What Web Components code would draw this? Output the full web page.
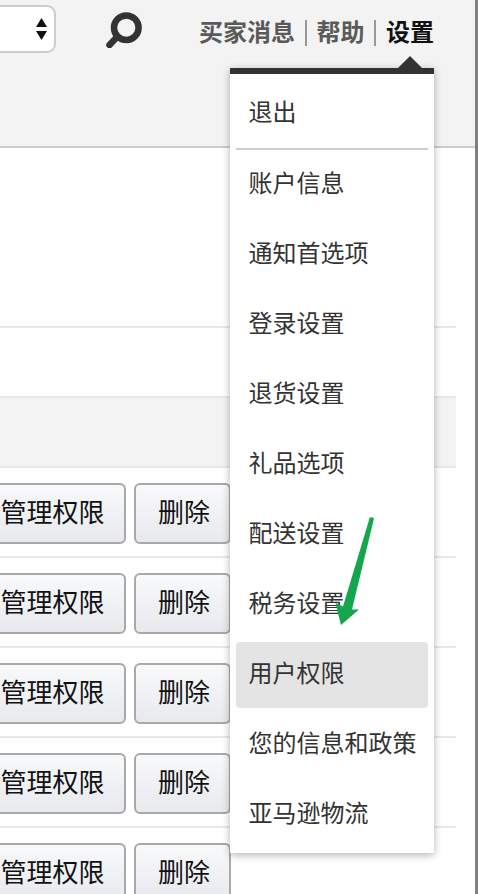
<!doctype html>
<html lang="zh"><head><meta charset="utf-8"><title>设置</title>
<style>
html,body{margin:0;height:100%;overflow:hidden;background:#fff}
body{font-family:"Liberation Sans","Noto Sans CJK SC",sans-serif;color:#333}
</style></head>
<body>
<app-page>
  <app-header>
    <nav-link>买家消息</nav-link><nav-link sep>帮助</nav-link><nav-link sep active>设置</nav-link>
  </app-header>
  <app-section></app-section>
  <app-row plain></app-row>
  <app-row head></app-row>
  <app-row><ui-button wide>管理权限</ui-button><ui-button>删除</ui-button></app-row>
  <app-row><ui-button wide>管理权限</ui-button><ui-button>删除</ui-button></app-row>
  <app-row><ui-button wide>管理权限</ui-button><ui-button>删除</ui-button></app-row>
  <app-row><ui-button wide>管理权限</ui-button><ui-button>删除</ui-button></app-row>
  <app-row><ui-button wide>管理权限</ui-button><ui-button>删除</ui-button></app-row>
  <drop-menu>
    <menu-item>退出</menu-item>
    <menu-sep></menu-sep>
    <menu-item>账户信息</menu-item>
    <menu-item>通知首选项</menu-item>
    <menu-item>登录设置</menu-item>
    <menu-item>退货设置</menu-item>
    <menu-item>礼品选项</menu-item>
    <menu-item>配送设置</menu-item>
    <menu-item>税务设置</menu-item>
    <menu-item active>用户权限</menu-item>
    <menu-item>您的信息和政策</menu-item>
    <menu-item>亚马逊物流</menu-item>
  </drop-menu>
  <green-arrow></green-arrow>
</app-page>
<script>
function def(name, css, html){
  customElements.define(name, class extends HTMLElement{
    constructor(){super();this.attachShadow({mode:'open'}).innerHTML='<style>'+css+'</style>'+html;}
  });
}
def('app-page',`:host{display:block;position:relative;width:478px;height:894px;overflow:hidden;box-sizing:border-box;border-right:3px solid #808080;background:#fff}`,`<slot></slot>`);
def('app-header',`:host{display:flex;justify-content:flex-end;align-items:flex-start;box-sizing:border-box;height:148px;background:#f3f3f3;border-bottom:2px solid #ccc;padding:5px 41px 0 0;overflow:hidden}
.sel{flex:none;width:120px;height:48px;box-sizing:border-box;background:#fff;border:2px solid #ccc;border-radius:9px;display:flex;justify-content:flex-end;align-items:center;padding-right:7px}
.sel svg{display:block}
.mag{flex:none;display:block;margin:7px 57px 0 50px}
.nav{flex:none;display:flex;align-items:center;height:56px}`,
`<div class="sel"><svg width="11" height="22" viewBox="0 0 11 22"><path d="M5.5 0L11 9H0zM5.5 22L0 13H11z" fill="#111"/></svg></div>
<svg class="mag" width="36" height="36" viewBox="0 0 36 36"><circle cx="20.3" cy="15.7" r="12.3" fill="none" stroke="#333" stroke-width="6.5"/><path d="M10.5 25.5L3.5 33" stroke="#333" stroke-width="6.5" stroke-linecap="round"/></svg>
<div class="nav"><slot></slot></div>`);
def('nav-link',`:host{display:flex;align-items:center;font:bold 24px/28px "Liberation Sans","Noto Sans CJK SC",sans-serif;color:#5a5a5a}
:host([active]){color:#111}
i{display:none;width:2px;height:26px;background:#999;margin:0 10px 0 9.5px}
:host([sep]) i{display:block}`,`<i></i><slot></slot>`);
def('app-section',`:host{display:block;height:178px}`,``);
def('app-row',`:host{display:flex;justify-content:flex-end;align-items:flex-start;gap:8px;box-sizing:border-box;width:456px;height:90px;border-bottom:2px solid #e8e8e8;padding:15px 225px 0 0}
:host([plain]){height:70px;padding:0;border-top:2px solid #e8e8e8;border-bottom:0}
:host([head]){height:72px;padding:0;background:#f3f3f3;border-top:2px solid #e8e8e8}`,`<slot></slot>`);
def('ui-button',`:host{flex:none;display:flex;justify-content:center;align-items:center;box-sizing:border-box;width:97px;height:61px;padding:0 0 2px 3px;border:2px solid #a9a9a9;border-radius:6px;background:linear-gradient(#f8f9fb,#e7e9ed);font:26px/30px "Liberation Sans","Noto Sans CJK SC",sans-serif;color:#111}
:host([wide]){width:147px;padding-left:0}`,`<slot></slot>`);
def('drop-menu',`:host{position:absolute;left:230px;top:68px;width:204px;height:785px;box-sizing:border-box;background:#fff;border-top:6px solid #333;padding:7px 6px 5px;display:flex;flex-direction:column;gap:4px;box-shadow:0 2px 8px rgba(0,0,0,.3)}
.tip{position:absolute;left:168px;top:-18px;width:0;height:0;border:12px solid transparent;border-top:0;border-bottom:12px solid #333}`,`<div class="tip"></div><slot></slot>`);
def('menu-item',`:host{display:flex;align-items:center;box-sizing:border-box;height:66px;padding:0 0 3px 12.5px;border-radius:4px;font:24px/30px "Liberation Sans","Noto Sans CJK SC",sans-serif;color:#333;white-space:nowrap}
:host([active]){background:#e4e4e4}`,`<slot></slot>`);
def('menu-sep',`:host{display:block;height:2px;background:#ccc;margin:-3px 0 -2px}`,``);
def('green-arrow',`:host{position:absolute;left:330px;top:510px;width:50px;height:120px;display:block}svg{display:block}`,
`<svg width="50" height="120" viewBox="330 510 50 120"><path d="M369.8 517.5Q372 516.5 374 518.5L352 609.5L359 609.5L341 625L335.5 603L343 606.5Z" fill="#14a64c"/></svg>`);
</script>
</body></html>
